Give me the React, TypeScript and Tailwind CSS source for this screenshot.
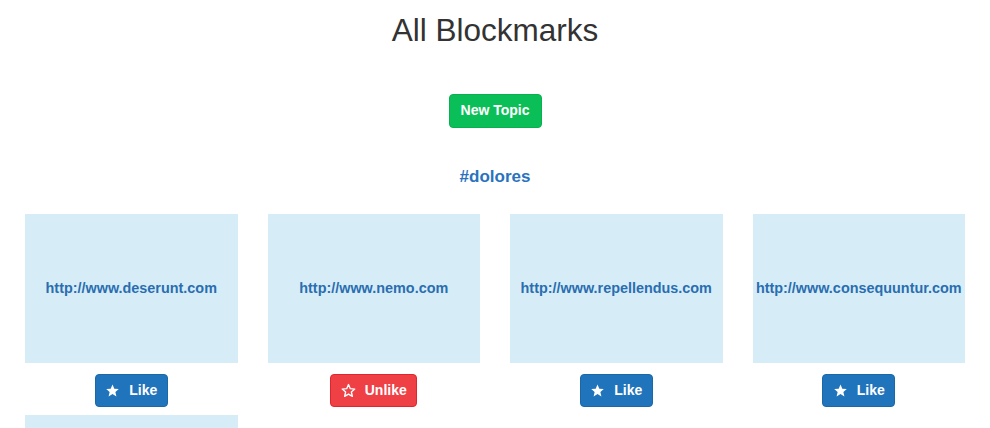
type TBookmark = {
  url: string;
  liked: boolean;
};

const bookmarks: TBookmark[] = [
  { url: `http://www.deserunt.com`, liked: false },
  { url: `http://www.nemo.com`, liked: true },
  { url: `http://www.repellendus.com`, liked: false },
  { url: `http://www.consequuntur.com`, liked: false },
  { url: `http://www.voluptas.com`, liked: false },
];

const Star = ({ filled }: { filled: boolean }) => (
  <svg width={15} height={15} viewBox="0 0 24 24" aria-hidden="true">
    <path
      d="M12 2.5l2.9 6.6 7.1.6-5.4 4.7 1.6 7-6.2-3.7-6.2 3.7 1.6-7L2 9.7l7.1-.6z"
      fill={filled ? 'currentColor' : 'none'}
      stroke="currentColor"
      strokeWidth={filled ? 0 : 2.2}
      strokeLinejoin="round"
    />
  </svg>
);

const BookmarkCard = ({ bookmark }: { bookmark: TBookmark }) => (
  <div className="px-[15px] mb-[8px]">
    <div className="h-[149px] bg-[#d6edf7] flex items-center justify-center">
      <a href={bookmark.url} className="text-[14.4px] font-bold text-[#2a6db0] whitespace-nowrap">
        {bookmark.url}
      </a>
    </div>
    <div className="flex justify-center mt-[11px]">
      {bookmark.liked ? (
        <button
          type="button"
          className="h-[33px] w-[87px] flex items-center justify-center gap-[9px] rounded-[4px] bg-[#ef4046] border border-[#e0262d] text-white text-[14px] font-bold"
        >
          <Star filled={false} />
          Unlike
        </button>
      ) : (
        <button
          type="button"
          className="h-[33px] w-[73px] flex items-center justify-center gap-[9px] rounded-[4px] bg-[#1f74bb] border border-[#1a68a8] text-white text-[14px] font-bold"
        >
          <Star filled />
          Like
        </button>
      )}
    </div>
  </div>
);

const App = () => (
  <div className="min-h-screen bg-white px-[10px] font-['Liberation_Sans',Arial,sans-serif] text-[#333]">
    <h1 className="text-center text-[31.5px] leading-none font-medium pt-[15px]">All Blockmarks</h1>
    <div className="flex justify-center mt-[47px]">
      <button
        type="button"
        className="h-[34px] w-[93px] rounded-[4px] bg-[#0bbf58] border border-[#09b04f] text-white text-[14px] font-bold"
      >
        New Topic
      </button>
    </div>
    <h3 className="text-center text-[17px] font-bold text-[#2a72be] mt-[36px]">#dolores</h3>
    <div className="grid grid-cols-4 mt-[25px]">
      {bookmarks.map((b: TBookmark) => (
        <BookmarkCard key={b.url} bookmark={b} />
      ))}
    </div>
  </div>
);

export default App;
